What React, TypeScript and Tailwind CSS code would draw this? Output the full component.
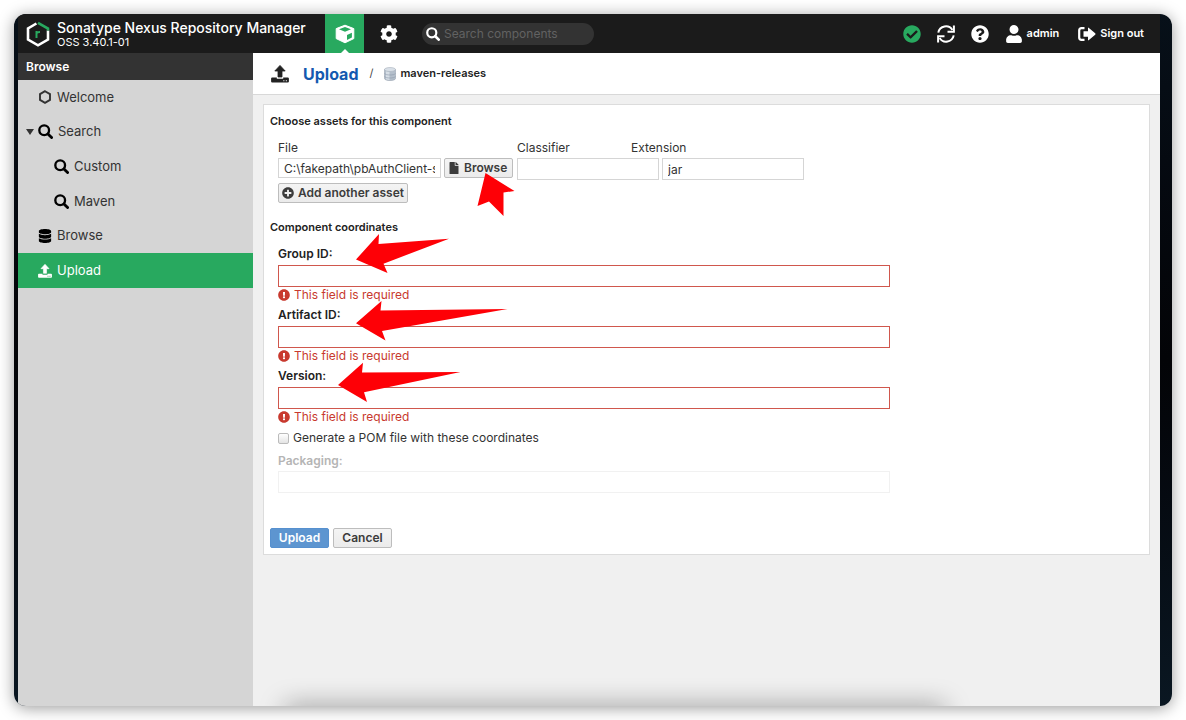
import type { ReactNode } from "react";
import { FaCheckCircle, FaCog, FaDatabase, FaExclamationCircle, FaFile, FaPlusCircle, FaQuestionCircle, FaUser } from "react-icons/fa";

const SearchIcon = ({ className }: { className?: string }) => (
  <svg viewBox="0 0 16 16" className={className} fill="none" stroke="currentColor" aria-hidden="true">
    <circle cx="6.6" cy="6.6" r="5.2" strokeWidth="2.5" />
    <path d="M10.6 10.6L14.5 14.5" strokeWidth="3" strokeLinecap="round" />
  </svg>
);

const UploadIcon = ({ className }: { className?: string }) => (
  <svg viewBox="0 0 18 18" className={className} fill="currentColor" aria-hidden="true">
    <path d="M9 .4L14.2 6H11v6H7V6H3.8Z" stroke="currentColor" strokeWidth=".8" strokeLinejoin="round" />
    <path
      fillRule="evenodd"
      d="M1.2 12.500H5.800V13.800H12.200V12.500H16.800Q17.900 12.500 17.900 13.400V16.600Q17.900 17.600 16.800 17.600H1.200Q.1 17.600 .1 16.600V13.400Q.1 12.500 1.200 12.500ZM12.300 15.200V16.300H13.400V15.200ZM14.800 15.200V16.300H15.900V15.200Z"
    />
  </svg>
);

const SyncIcon = () => (
  <svg viewBox="0 0 18 18" className="size-[18px]" fill="none" stroke="currentColor" strokeWidth="2" aria-hidden="true">
    <path d="M1.300 7.600A7.700 7.700 0 0 1 15.400 5M16.700 10.400A7.700 7.700 0 0 1 2.600 13" />
    <path d="M16.900 .5V6.700H10.500M1.100 17.500V11.300H7.500" />
  </svg>
);

const SignOutIcon = () => (
  <svg viewBox="0 0 18 14" className="h-3.5 w-[18px]" fill="currentColor" aria-hidden="true">
    <path d="M6.500 1.100H3.500Q1.200 1.100 1.200 3.400V10.600Q1.200 12.900 3.500 12.900H6.500" fill="none" stroke="currentColor" strokeWidth="2.200" />
    <path d="M5.500 4.300H10V1.200Q10 .1 10.900 .9L17.200 6.300Q17.900 7 17.200 7.700L10.900 13.100Q10 13.900 10 12.800V9.700H5.500Z" />
  </svg>
);

const BoxIcon = () => (
  <svg viewBox="0 0 20 20" className="size-5" aria-hidden="true">
    <path d="M10 1.200L18.800 4.600V14.600L10 18.800L1.200 14.600V4.600Z" fill="#fff" stroke="#fff" strokeLinejoin="round" />
    <path d="M10 3.100L16 5.300L10 7.800L4 5.300ZM12 11L16.900 8.800V13.400L12 15.900Z" fill="#28a95f" />
  </svg>
);

const Logo = () => (
  <svg viewBox="0 0 24 26" className="h-[26px] w-6" fill="none" strokeWidth="2.600" aria-hidden="true">
    <path d="M10.400 2.500L2 7.500V18.500L12 24.300L22 18.500V9.500" stroke="#fff" />
    <path d="M12 1.800L22 7.500V9.500" stroke="#28a95f" />
    <path d="M10.500 17V10M10.500 12.300Q11.300 10.800 14 10.900" stroke="#28a95f" strokeWidth="2" />
  </svg>
);

const HexIcon = () => (
  <svg viewBox="0 0 14 14" className="size-3.5" fill="none" stroke="#333" strokeWidth="1.900" aria-hidden="true">
    <path d="M7 1.200L12 4.100V9.900L7 12.800L2 9.900V4.100Z" />
  </svg>
);

const DrumIcon = () => (
  <svg viewBox="0 0 12 14" className="h-3.5 w-3" aria-hidden="true">
    <path d="M.5 2.500V11.500C.5 14.200 11.500 14.200 11.500 11.500V2.500Z" fill="#b4bfcb" stroke="#98a3b0" strokeWidth=".6" />
    <path d="M2 4V12.300Q4 13 5.500 13V5Z" fill="#d6dee6" />
    <ellipse cx="6" cy="2.500" rx="5.500" ry="2" fill="#d9e0e8" stroke="#a8b2bd" strokeWidth=".6" />
    <path d="M.5 6.500C2 8.500 10 8.500 11.500 6.500M.5 9.500C2 11.500 10 11.500 11.500 9.500" fill="none" stroke="#8f9bab" strokeWidth=".6" />
  </svg>
);

const navItems = [
  { label: "Welcome", icon: <HexIcon />, pad: "pl-5" },
  { label: "Search", icon: <SearchIcon className="size-[15px] text-black" />, pad: "pl-5", expanded: true },
  { label: "Custom", icon: <SearchIcon className="size-[15px] text-black" />, pad: "pl-9" },
  { label: "Maven", icon: <SearchIcon className="size-[15px] text-black" />, pad: "pl-9" },
  { label: "Browse", icon: <FaDatabase className="size-3.5 text-black" />, pad: "pl-5" },
  { label: "Upload", icon: <UploadIcon className="size-3.5" />, pad: "pl-5", active: true },
];

const requiredFields = [
  { id: "group", label: "Group ID:" },
  { id: "artifact", label: "Artifact ID:" },
  { id: "version", label: "Version:" },
];

const grayButton =
  "flex h-5 items-center rounded-xs border border-[#bdbdbd] bg-linear-to-b from-[#f4f4f4] to-[#ebebeb] text-xs font-semibold text-[#3c3c3c]";
const textInput = "border border-[#d5d5d5] bg-white px-[5px] text-xs text-[#333] outline-none";

function IconButton({ label, children }: { label: string; children: ReactNode }) {
  return (
    <button type="button" aria-label={label} className="text-white">
      {children}
    </button>
  );
}

function Header() {
  return (
    <header className="flex h-[39px] shrink-0 items-center bg-[#1b1b1b] pr-4 text-white">
      <div className="flex w-[307px] shrink-0 items-center gap-[7px] pl-2">
        <Logo />
        <div className="whitespace-nowrap">
          <h1 className="text-sm leading-4 font-medium">Sonatype Nexus Repository Manager</h1>
          <p className="text-[11px] leading-3">OSS 3.40.1-01</p>
        </div>
      </div>
      <button type="button" aria-label="Browse server contents" className="relative flex h-full w-[39px] items-center justify-center bg-[#28a95f]">
        <BoxIcon />
        <span className="absolute bottom-0 left-1/2 -translate-x-1/2 border-x-4 border-b-4 border-x-transparent border-b-white" />
      </button>
      <button type="button" aria-label="Server administration" className="flex w-[50px] justify-center">
        <FaCog className="size-[18px]" />
      </button>
      <label className="ml-2 flex h-[22px] w-[172px] items-center gap-1 rounded-full bg-[#333] px-1">
        <SearchIcon className="size-3.5 shrink-0" />
        <input aria-label="Search components" placeholder="Search components" className="min-w-0 flex-1 bg-transparent text-xs outline-none placeholder:text-[#626262]" />
      </label>
      <div className="ml-auto flex items-center gap-4">
        <IconButton label="System status">
          <FaCheckCircle className="size-[18px] text-[#28a95f]" />
        </IconButton>
        <IconButton label="Refresh">
          <SyncIcon />
        </IconButton>
        <IconButton label="Help">
          <FaQuestionCircle className="size-[18px]" />
        </IconButton>
        <button type="button" className="flex items-center gap-1 text-[11px] font-semibold">
          <FaUser className="size-[18px]" />
          admin
        </button>
        <button type="button" className="ml-[3px] flex items-center gap-1 text-[11px] font-semibold">
          <SignOutIcon />
          Sign out
        </button>
      </div>
    </header>
  );
}

function Sidebar() {
  return (
    <aside className="w-[235px] shrink-0 bg-[#d5d5d5]">
      <h2 className="flex h-[27px] items-center bg-[#333] px-2 text-xs font-semibold text-white">Browse</h2>
      <nav>
        <ul className="grid h-[208px] auto-rows-fr">
          {navItems.map((item) => (
            <li key={item.label}>
              <a
                href="#"
                className={`relative flex h-full items-center gap-[5px] text-[13px] ${item.pad} ${
                  item.active ? "bg-[#28a95f] text-white" : "text-[#333]"
                }`}
              >
                {item.expanded && (
                  <span className="absolute left-2 border-x-4 border-t-6 border-x-transparent border-t-[#333]" />
                )}
                {item.icon}
                {item.label}
              </a>
            </li>
          ))}
        </ul>
      </nav>
    </aside>
  );
}

/* Hand-drawn pointers laid over the form */
function Pointers() {
  return (
    <svg width="260" height="310" className="pointer-events-none absolute top-0 left-0" fill="#fe0006" aria-hidden="true">
      <path d="M221.500 68L250.500 86L239.500 87.500V111L225 96.500L213.500 101Z" />
      <path d="M92 154.500L115 129L114.500 139L185 133.700L119.500 158.700L123.500 168Z" />
      <path d="M92 218.300L117.500 196L116.500 205.500L243.500 204L118 226L121.500 235.500Z" />
      <path d="M74 280L99 257.700L98 267.500L196.500 267L100 287.300L103 297Z" />
    </svg>
  );
}

function UploadForm() {
  return (
    <form className="relative m-[9px] mx-2.5 border border-[#dcdcdc] bg-white px-1.5 pt-2 pb-1.5 text-xs text-[#333]">
      <h3 className="text-[11px] leading-4 font-semibold text-[#222]">Choose assets for this component</h3>
      <div className="px-2 pt-[9px]">
        <div className="flex leading-5">
          <label htmlFor="file" className="w-[239px]">File</label>
          <label htmlFor="classifier" className="w-[114px]">Classifier</label>
          <label htmlFor="extension">Extension</label>
        </div>
        <div className="flex items-start">
          <input id="file" readOnly defaultValue="C:\fakepath\pbAuthClient-spring.jar" className={`${textInput} h-5 w-[163px]`} />
          <button type="button" className={`${grayButton} ml-[3px] w-[69px] gap-1 px-[3px]`}>
            <FaFile className="size-3 shrink-0" />
            Browse
          </button>
          <input id="classifier" className={`${textInput} ml-1 h-[22px] w-[142px]`} />
          <input id="extension" defaultValue="jar" className={`${textInput} ml-[3px] h-[22px] w-[142px]`} />
        </div>
        <button type="button" className={`${grayButton} mt-[3px] gap-1 px-[3px]`}>
          <FaPlusCircle className="size-3" />
          Add another asset
        </button>
      </div>
      <h3 className="mt-4 text-[11px] leading-4 font-semibold text-[#222]">Component coordinates</h3>
      <div className="px-2 pt-2.5">
        {requiredFields.map((field) => (
          <div key={field.id} className="flex h-[61px] flex-col items-start">
            <label htmlFor={field.id} className="h-5 leading-[18px] font-semibold text-[#222]">
              {field.label}
            </label>
            <input id={field.id} aria-invalid="true" className="h-[22px] w-full max-w-[612px] border border-[#d0574d] px-1 outline-none" />
            <p className="flex items-center gap-1 leading-4 text-[#c8392e]">
              <FaExclamationCircle className="size-3" />
              This field is required
            </p>
          </div>
        ))}
        <label className="flex h-5 items-center gap-1">
          <input type="checkbox" className="size-[11px] appearance-none rounded-xs border border-[#bbb] bg-linear-to-b from-white to-[#e4e4e4]" />
          Generate a POM file with these coordinates
        </label>
        <div className="mt-[3px] flex flex-col items-start">
          <label htmlFor="packaging" className="leading-5 font-semibold text-[#b5b5b5]">Packaging:</label>
          <input id="packaging" disabled className="h-[22px] w-full max-w-[612px] border border-[#f1f1f1] px-1" />
        </div>
      </div>
      <div className="mt-[35px] flex gap-1">
        <button type="submit" className="h-5 w-[59px] rounded-xs border border-[#5690cf] bg-[#5d95d0] font-semibold text-white">Upload</button>
        <button type="button" className={`${grayButton} w-[59px] justify-center`}>Cancel</button>
      </div>
      <Pointers />
    </form>
  );
}

export default function App() {
  return (
    <div className="flex h-screen bg-white p-3.5 font-['Inter','Liberation_Sans',sans-serif]">
      <div className="flex min-w-0 flex-1 flex-col overflow-hidden rounded-xl bg-linear-to-b from-[#071019] via-[#030407] to-[#0a1722] pr-3 pl-1 shadow-[0_2px_16px_rgba(0,0,0,0.4)]">
        <Header />
        <div className="flex min-h-0 flex-1">
          <Sidebar />
          <main className="relative min-w-0 flex-1 overflow-hidden bg-[#f0f0f0]">
            <div className="flex h-[42px] items-center border-b border-[#d8d8d8] bg-white pl-[18px]">
              <UploadIcon className="size-[18px] text-[#222]" />
              <a href="#" className="ml-3.5 text-base font-bold text-[#1459b0]">Upload</a>
              <span className="mx-[11px] text-[11px] text-[#444]">/</span>
              <DrumIcon />
              <span className="ml-1 text-[11px] font-semibold text-[#222]">maven-releases</span>
            </div>
            <UploadForm />
            <div className="absolute inset-x-0 -bottom-4 mr-[215px] ml-[32px] h-4 shadow-[0_0_26px_rgba(0,0,0,0.4)]" />
          </main>
        </div>
      </div>
    </div>
  );
}
